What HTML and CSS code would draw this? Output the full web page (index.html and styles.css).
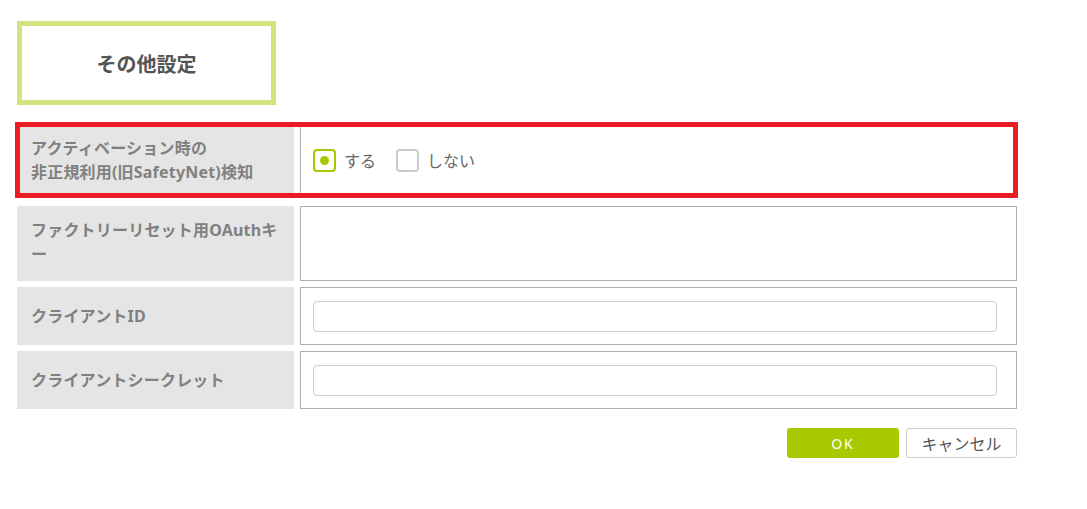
FILE: index.html
```html
<!DOCTYPE html>
<html lang="ja">
<head>
    <meta charset="UTF-8">
    <meta name="viewport" content="width=device-width, initial-scale=1.0">
    <title>その他設定</title>
    <link rel="stylesheet" href="styles.css">
</head>
<body>
    <div class="page">
        <div class="title-box">
            <h2>その他設定</h2>
        </div>
        <div class="form-table">
            <div class="row highlight">
                <div class="label">アクティベーション時の<br>非正規利用(旧SafetyNet)検知</div>
                <div class="value">
                    <label class="radio checked"><span class="mark"></span>する</label>
                    <label class="radio"><span class="mark"></span>しない</label>
                </div>
            </div>
            <div class="row tall">
                <div class="label top">ファクトリーリセット用OAuthキー</div>
                <div class="value"></div>
            </div>
            <div class="row">
                <div class="label">クライアントID</div>
                <div class="value"><input type="text" class="text-input"></div>
            </div>
            <div class="row">
                <div class="label">クライアントシークレット</div>
                <div class="value"><input type="text" class="text-input"></div>
            </div>
        </div>
        <div class="buttons">
            <button class="btn ok">OK</button>
            <button class="btn cancel">キャンセル</button>
        </div>
    </div>
</body>
</html>
```

FILE: styles.css
```css
body {
    margin: 0;
    background-color: #fff;
    font-family: "Noto Sans", "Noto Sans CJK JP", sans-serif;
    color: #555;
}
.page {
    width: 1000px;
    margin-left: 17px;
    padding-top: 21px;
}
.title-box {
    width: 249px;
    height: 74px;
    border: 5px solid #d4e37d;
    display: flex;
    align-items: center;
    justify-content: center;
}
.title-box h2 {
    margin: 0;
    font-size: 20px;
    font-weight: bold;
    color: #555;
}
.form-table {
    display: flex;
    flex-direction: column;
    gap: 6px;
    margin-top: 19px;
}
.row {
    display: flex;
    gap: 6px;
    height: 58px;
}
.row.highlight {
    position: relative;
    height: 72px;
    margin-bottom: 4px;
}
/* red marker drawn over the first row */
.row.highlight::after {
    content: "";
    position: absolute;
    top: -2px;
    left: -2px;
    right: -1px;
    bottom: -2px;
    border: 5px solid #ed1c24;
}
.row.tall {
    height: 75px;
}
.label {
    width: 277px;
    box-sizing: border-box;
    padding: 0 16px 0 14px;
    background-color: #e5e5e5;
    color: #808080;
    font-size: 16px;
    font-weight: bold;
    line-height: 24px;
    letter-spacing: 0.2px;
    display: flex;
    align-items: center;
}
.label.top {
    align-items: flex-start;
    padding-top: 12px;
}
.value {
    flex: 1;
    border: 1px solid #b0b0b0;
    display: flex;
    align-items: center;
    padding: 0 19px 0 12px;
}
.radio {
    display: flex;
    align-items: center;
    font-size: 16px;
    color: #666;
    margin-right: 20px;
}
.radio .mark {
    width: 19px;
    height: 19px;
    border: 2px solid #cccccc;
    border-radius: 4px;
    margin-right: 8px;
    display: flex;
    align-items: center;
    justify-content: center;
}
.radio.checked .mark {
    border-color: #a9c800;
}
.radio.checked .mark::before {
    content: "";
    width: 9px;
    height: 9px;
    border-radius: 50%;
    background-color: #a9c800;
}
.text-input {
    width: 100%;
    height: 31px;
    box-sizing: border-box;
    border: 1px solid #cccccc;
    border-radius: 4px;
    margin: 0;
    padding: 0 8px;
}
.buttons {
    display: flex;
    justify-content: flex-end;
    gap: 7px;
    margin-top: 19px;
}
.btn {
    height: 30px;
    box-sizing: border-box;
    border-radius: 3px;
    cursor: pointer;
    font-family: "Noto Sans", "Noto Sans CJK JP", sans-serif;
}
.btn.ok {
    width: 112px;
    background-color: #a9c800;
    border: none;
    color: #fff;
    font-size: 14px;
    letter-spacing: 2px;
}
.btn.cancel {
    width: 111px;
    background-color: #fff;
    border: 1px solid #cccccc;
    color: #555;
    font-size: 16px;
}
```
